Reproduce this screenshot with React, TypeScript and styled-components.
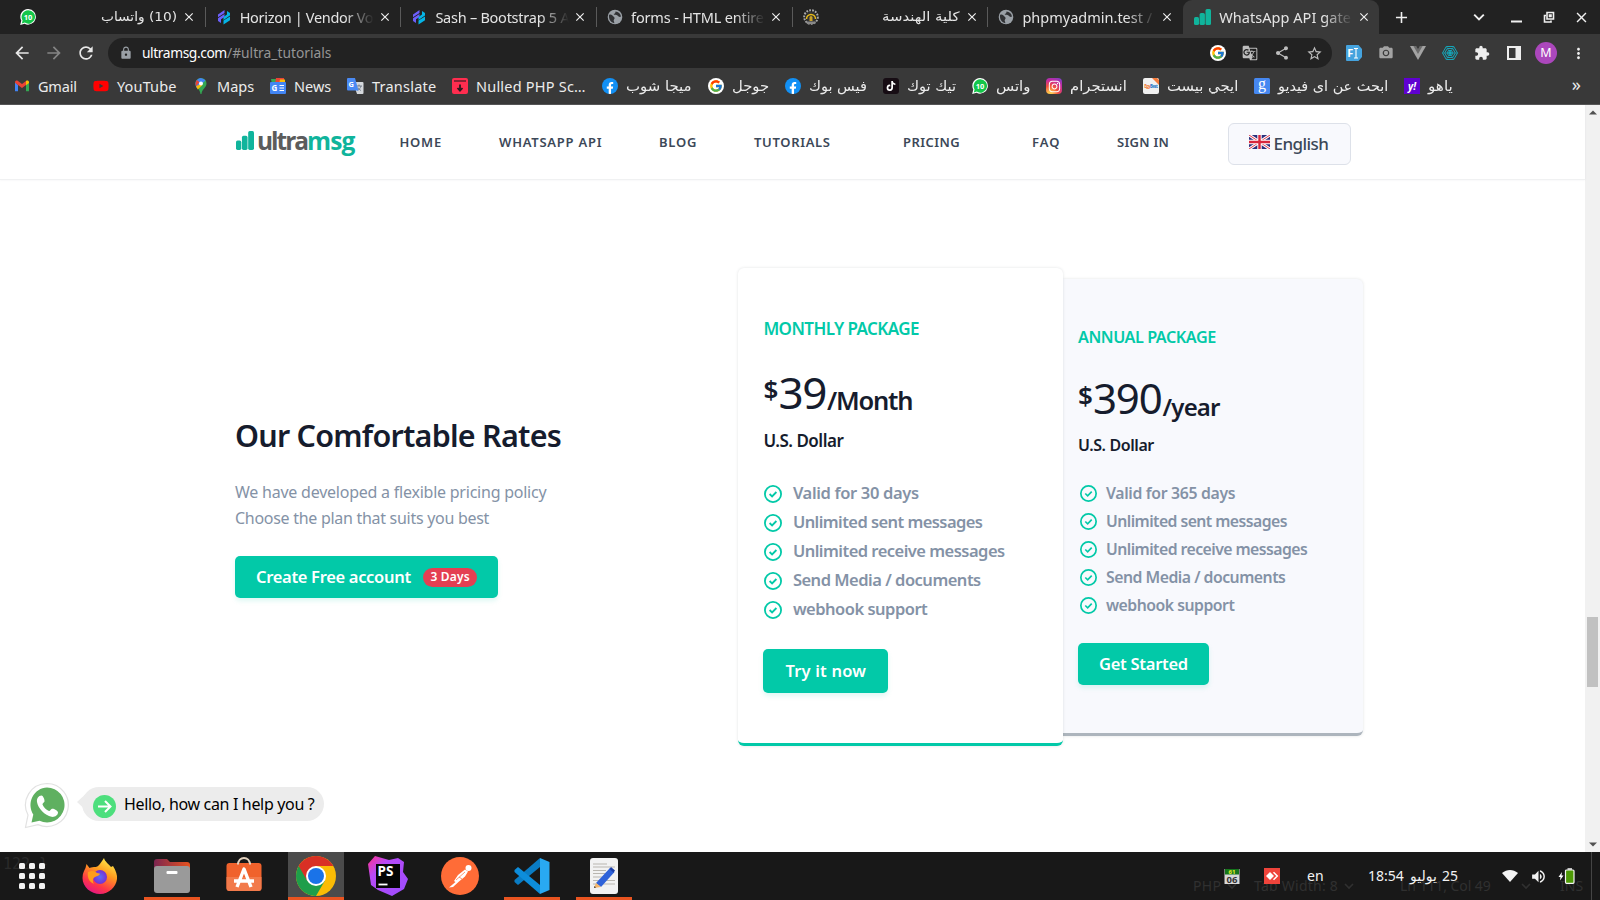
import React, { useLayoutEffect, useRef, useState } from "react";
import styled, { createGlobalStyle, css } from "styled-components";
import {
  MdArrowBack, MdArrowForward, MdRefresh, MdLock, MdShare, MdStarBorder, MdExtension,
  MdMoreVert, MdPhotoCamera, MdGTranslate, MdClose, MdAdd, MdVolumeUp,
} from "react-icons/md";
import { FaFacebookF, FaTiktok, FaInstagram, FaYoutube } from "react-icons/fa";
import { FcGoogle } from "react-icons/fc";

const Global = createGlobalStyle`
  * { box-sizing: border-box; }
  body { margin: 0; overflow: hidden; font-family: "Noto Sans", "DejaVu Sans", sans-serif; }
  svg { display: block; flex: none; }
`;

/* ---------- text set to a given measure ---------- */
const Measure = styled.span<{ $w: number; $rtl?: boolean }>`
  display: block;
  flex: none;
  width: ${(p) => p.$w}px;
  white-space: pre;
  direction: ${(p) => (p.$rtl ? "rtl" : "ltr")};
  text-align: left;
`;
const Inner = styled.span`
  display: inline-block;
  transform-origin: 0 50%;
`;
function Fit({ w, rtl, children, className }: { w: number; rtl?: boolean; children: string; className?: string }) {
  const ref = useRef<HTMLSpanElement>(null);
  const [style, setStyle] = useState<React.CSSProperties>({});
  useLayoutEffect(() => {
    const el = ref.current;
    if (!el) return;
    const natural = el.offsetWidth;
    setStyle(rtl ? { transform: `scaleX(${w / natural})` } : { letterSpacing: `${(w - natural) / children.length}px` });
  }, []);
  return (
    <Measure $w={w} $rtl={rtl} className={className}>
      <Inner ref={ref} style={style}>{children}</Inner>
    </Measure>
  );
}

const Screen = styled.div`
  width: 1600px;
  height: 900px;
  display: flex;
  flex-direction: column;
  overflow: hidden;
  background: #fff;
`;

/* ---------- browser chrome ---------- */
const TabStrip = styled.div`
  height: 34px;
  flex: none;
  display: flex;
  align-items: stretch;
  background: #222;
  padding-left: 9px;
  color: #e4e4e4;
`;
const Tab = styled.div<{ $active?: boolean }>`
  width: 195.7px;
  flex: none;
  display: flex;
  align-items: center;
  padding-left: 11px;
  font-size: 14.5px;
  line-height: 20px;
  border-radius: 9px 9px 0 0;
  background: ${(p) => (p.$active ? "#393939" : "transparent")};
  > svg:last-child { margin-left: 4px; }
`;
const TabTitle = styled.div<{ $rtl?: boolean }>`
  width: 134px;
  margin: -1px 0 0 8px;
  height: 20px;
  overflow: hidden;
  display: flex;
  justify-content: ${(p) => (p.$rtl ? "flex-end" : "flex-start")};
  ${(p) => p.$rtl ? css`padding-right: 1px; font-family: "DejaVu Sans", sans-serif; font-size: 13px;` : css`mask-image: linear-gradient(90deg, #000 78%, transparent 100%);`}
`;
const TabLine = styled.div`
  width: 1px;
  height: 20px;
  margin: 7px -1px 0 0;
  background: #5a5a5a;
`;
const WindowTools = styled.div`
  display: flex;
  align-items: center;
  margin-left: 13px;
  color: #f0f0f0;
  svg:nth-child(2) { margin-left: 62px; }
  svg:nth-child(3) { margin-left: 26px; }
  svg:nth-child(4) { margin-left: 21px; }
  svg:nth-child(5) { margin-left: 18px; }
`;
const Toolbar = styled.div`
  height: 38px;
  flex: none;
  background: #393939;
  display: flex;
  align-items: center;
  padding: 0 12px;
  color: #e8e8e8;
`;
const NavButtons = styled.div`
  display: flex;
  gap: 12px;
  width: 96px;
`;
const Omnibox = styled.div`
  width: 1224px;
  height: 30px;
  border-radius: 15px;
  background: #222;
  display: flex;
  align-items: center;
  padding: 0 9px 0 11px;
  font-size: 13.8px;
  color: #fff;
`;
const UrlRest = styled.div`
  margin-top: -1px;
  color: #959595;
  flex: 1;
`;
const Tools = styled.div<{ $gap: number }>`
  display: flex;
  align-items: center;
  gap: ${(p) => p.$gap}px;
  color: #bdbdbd;
`;
const Host = styled.div`
  margin: -1px 0 0 9px;
`;
const Extensions = styled(Tools)`
  margin-left: 14px;
  color: #eee;
`;
const Avatar = styled.div`
  width: 22px;
  height: 22px;
  margin: 0 -3px;
  border-radius: 50%;
  background: #ab47bc;
  color: #fff;
  font-size: 12.5px;
  line-height: 22px;
  text-align: center;
`;
const Bookmarks = styled.div`
  height: 33px;
  flex: none;
  background: #393939;
  border-bottom: 1px solid #575757;
  display: flex;
  align-items: center;
  gap: 16px;
  padding: 0 19px 4px 14px;
  color: #ececec;
  font-size: 14.5px;
  line-height: 22px;
`;
const Bookmark = styled.div<{ $rtl?: boolean }>`
  display: flex;
  align-items: center;
  gap: 8px;
  ${(p) => p.$rtl && css`font-family: "DejaVu Sans", sans-serif; font-size: 14px;`}
  > span { margin-top: -1px; }
`;
const More = styled.div`
  margin: -4px 0 0 auto;
  font-size: 18px;
`;

/* ---------- small icons ---------- */
const Disc = styled.div<{ $bg: string; $fg?: string; $r?: string }>`
  width: 16px;
  height: 16px;
  flex: none;
  display: flex;
  align-items: center;
  justify-content: center;
  overflow: hidden;
  border-radius: ${(p) => p.$r || "50%"};
  background: ${(p) => p.$bg};
  color: ${(p) => p.$fg || "#fff"};
  font: italic 700 10px/16px "Noto Sans", sans-serif;
`;
const FacebookF = styled(FaFacebookF)`
  margin-top: 4px;
`;
const Wa10 = () => (
  <svg width="16" height="16" viewBox="0 0 16 16">
    <path d="M8.2 0A7.8 7.8 0 1 1 4.6 14.8L.2 16l1.1-4.4A7.8 7.8 0 0 1 8.2 0z" fill="#fff" />
    <path d="M8.2 1.2A6.7 6.7 0 1 1 4.8 13.6L1.8 14.4l.8-3A6.7 6.7 0 0 1 8.2 1.2z" fill="#14c64a" />
    <text x="8.1" y="10.8" textAnchor="middle" fontSize="7.5" fontWeight="700" fontFamily="Noto Sans" fill="#fff">10</text>
  </svg>
);
const Prism = () => (
  <svg width="16" height="16" viewBox="0 0 16 16">
    <path d="M2 5.5 8.5 1v3L2 8.2z" fill="#6c5ffc" />
    <path d="M2 9.2 8.5 5v3L5 10.3V14l-3-2z" fill="#6c5ffc" />
    <path d="M14 6.5 7.5 11V8L11 5.5V2l3 2z" fill="#05b4e6" />
    <path d="M14 7.5 7.5 11.500v4L14 11.2z" fill="#05b4e6" />
  </svg>
);
const Globe = () => (
  <svg width="16" height="16" viewBox="0 0 16 16">
    <circle cx="8" cy="8" r="7.3" fill="#9aa0a6" />
    <path d="M2 6c2-1 3 0 4.5 1.5S8 9 7 10.5s.5 2 .3 3.7C4 13.5 1.5 10.5 2 6zM8.5 2.5c0 2-1 2.2-2 2.5 1 1.5 3 .5 4 1.5s2 2 3.5 1C13.5 4.5 11.5 2.8 8.5 2.5z" fill="#303134" />
  </svg>
);
const GearLogo = () => (
  <svg width="16" height="16" viewBox="0 0 16 16">
    <circle cx="8" cy="8" r="6.8" fill="none" stroke="#a9a9a9" strokeWidth="2" strokeDasharray="1.8 1.2" />
    <circle cx="8" cy="8" r="5.3" fill="#333" />
    <path d="M3.5 10a4.5 4.5 0 1 1 9 0" fill="none" stroke="#e8bb16" strokeWidth="1.5" />
    <path d="M6.5 12V8.5a1.5 1.5 0 0 1 3 0V12z" fill="#c9a227" />
    <path d="M3 12.5h10l-1 2.5H4z" fill="#888" />
  </svg>
);
const Bars = ({ w = 17, h = 16 }: { w?: number; h?: number }) => (
  <svg width={w} height={h} viewBox="0 0 17 16" preserveAspectRatio="none">
    <g fill="#10b49c">
      <rect x="0" y="8" width="5" height="8" rx="1.5" />
      <rect x="5.6" y="4" width="5.3" height="12" rx="1.5" />
      <rect x="11.5" y="0" width="5.5" height="16" rx="1.5" />
    </g>
  </svg>
);
const Gmail = () => (
  <svg width="16" height="16" viewBox="0 0 16 16">
    <path d="M1 4v9.3h3V7z" fill="#4285f4" /><path d="M15 4v9.3h-3V7z" fill="#34a853" />
    <path d="M1 4.2C1 2.5 2.900 2 4 2.900L8 6l4-3.100v4L8 10 1 4.8z" fill="#ea4335" />
    <path d="M12 2.900c1.200-.9 3-.4 3 1.300v.8l-3 2.200z" fill="#fbbc04" />
  </svg>
);
const MapsPin = () => (
  <svg width="16" height="16" viewBox="0 0 16 16">
    <path d="M8 0a5.500 5.500 0 0 1 5.500 5.500C13.500 9.500 9 11 8.500 16h-1C7 11 2.500 9.500 2.500 5.500A5.500 5.500 0 0 1 8 0z" fill="#34a853" />
    <path d="M4 1.900A5.500 5.500 0 0 1 12.500 2.400L4 10.200C3 9 2.500 7 2.500 5.500 2.500 4 3 2.800 4 1.900z" fill="#4285f4" />
    <path d="M4 1.900 6.500 4.200 3 8.300C2.200 6 2.500 3.500 4 1.900z" fill="#ea4335" />
    <path d="M3 8.300 6.300 6.800 9.500 7 4.800 11.500z" fill="#fbbc04" />
    <circle cx="8" cy="5.5" r="2" fill="#fff" />
  </svg>
);
const News = () => (
  <svg width="16" height="16" viewBox="0 0 16 16">
    <path d="M1 1h9l-1 5H2z" fill="#34a853" /><path d="M6 0h8v6H5z" fill="#ea4335" /><path d="M10 1.5h5V6H9z" fill="#fbbc04" />
    <rect y="4" width="16" height="12" rx="1" fill="#4285f4" />
    <path d="M9.5 7.500H14M9.500 10H14M9.500 12.500H14" stroke="#fff" strokeWidth="1.2" />
    <text x="1.5" y="13" fontSize="8" fontWeight="700" fill="#fff" fontFamily="Noto Sans">G</text>
  </svg>
);
const Translate = () => (
  <svg width="17" height="16" viewBox="0 0 17 16">
    <path d="M6 4h9.500a1 1 0 0 1 1 1v10a1 1 0 0 1-1 1H10z" fill="#d5d8dc" />
    <path d="M9.500 8H15M12 6.500V8M14 8c-.5 2-2 3.500-3.500 4.500M11 9.500c.5 1.500 2 2.500 3 3" stroke="#5f6b7a" strokeWidth=".8" fill="none" />
    <path d="M1 0h7l3.500 12.500H1a1 1 0 0 1-1-1V1a1 1 0 0 1 1-1z" fill="#4a8af4" />
    <text x="1.5" y="9" fontSize="7.5" fontWeight="700" fill="#fff" fontFamily="Noto Sans">G</text>
  </svg>
);
const Nulled = () => (
  <svg width="16" height="16" viewBox="0 0 16 16">
    <rect width="16" height="16" rx="2" fill="#ff2d4f" /><path d="M2 3h12" stroke="#3b1b22" strokeWidth="1.2" />
    <path d="M8 6.500v6M5.500 10 8 12.600 10.500 10" stroke="#2b1a1e" strokeWidth="1.8" fill="none" />
  </svg>
);
const Facebook = () => (<Disc $bg="#1290f5"><FacebookF size={12} /></Disc>);
const Google = () => (<Disc $bg="#fff"><FcGoogle size={14} /></Disc>);
const TikTok = () => (<Disc $bg="#170d14" $r="3px"><FaTiktok size={10} /></Disc>);
const Insta = () => (
  <Disc $bg="radial-gradient(circle at 25% 100%, #fec64b 10%, #f3513d 40%, #c32aa3 70%, #6a45d0 100%)" $r="4px"><FaInstagram size={13} /></Disc>
);
const EgyBest = () => (
  <svg width="16" height="16" viewBox="0 0 16 16">
    <rect width="16" height="16" rx="2" fill="#f1f1f1" /><path d="M9 0h5l2 2v5z" fill="#f47b3c" />
    <text x="1.2" y="10" fontSize="4.4" fontWeight="700" textLength="13.6" fontFamily="Noto Sans" fill="#f2732c">Egy<tspan fill="#2374c6">Best</tspan></text>
  </svg>
);
const GoogleOld = () => (
  <svg width="16" height="16" viewBox="0 0 16 16">
    <rect width="16" height="16" rx="1.5" fill="#4688f1" />
    <text x="8" y="11.2" textAnchor="middle" fontSize="16" fontFamily="Liberation Serif" fill="#fff">g</text>
  </svg>
);
const Vendor = () => (
  <svg width="16" height="16" viewBox="0 0 16 16">
    <path d="M1 0h11.500L16 4v8l-3.500 4H1a1 1 0 0 1-1-1V1a1 1 0 0 1 1-1z" fill="#45a3de" />
    <text x="1.2" y="12" fontSize="11" fontWeight="700" fontFamily="Noto Sans" fill="#fff">F</text>
    <path d="M8 3.500h4M8 13h4M10 3.500V13" stroke="#fff" strokeWidth="1.1" />
  </svg>
);
const VueMark = () => (
  <svg width="16" height="16" viewBox="0 0 16 16">
    <path d="M0 1h16L8 15z" fill="#a3a3a3" /><path d="M3.400 1H6l2 3.500L10 1h2.600L8 9z" fill="#6b6b6b" /><path d="M6 1h4L8 4.500z" fill="#393939" />
  </svg>
);
const Web = () => (
  <svg width="16" height="16" viewBox="0 0 16 16" fill="none" stroke="#16a5b8" strokeWidth="1">
    <path d="M4.300 1.500h7.400L15.500 8l-3.800 6.500H4.300L.5 8z" /><path d="M5.300 3.500h5.400L13.300 8l-2.600 4.500H5.300L2.700 8z" />
    <path d="M6.500 5.500h3L11 8l-1.500 2.500h-3L5 8z" /><path d="M.5 8h15M4.300 1.500l7.400 13M11.700 1.500l-7.400 13" strokeWidth=".6" />
    <circle cx="8" cy="8" r="1.3" fill="#16a5b8" />
  </svg>
);
const SidePanel = () => (
  <svg width="16" height="16" viewBox="0 0 16 16"><path d="M2 2h12v12H2z" fill="none" stroke="#eee" strokeWidth="2" /><path d="M9.500 1H15v14H9.500z" fill="#eee" /></svg>
);
const Cross = ({ s = 10 }: { s?: number }) => <MdClose size={s + 5} color="#f0f0f0" />;

/* ---------- web page ---------- */
const Viewport = styled.div`
  height: 747px;
  flex: none;
  display: flex;
`;
const Page = styled.div`
  width: 1585px;
  display: flex;
  flex-direction: column;
  position: relative;
`;
const Header = styled.header`
  height: 75px;
  flex: none;
  display: flex;
  align-items: center;
  padding-left: 236px;
  border-bottom: 1px solid #f0f1f2;
  box-shadow: 0 0 2px rgba(60, 72, 88, 0.08);
`;
const Logo = styled.div`
  display: flex;
  align-items: flex-end;
  width: 163.5px;
  height: 24px;
  margin-top: -2px;
  font: 700 24.5px/22px "Open Sans", sans-serif;
  color: #5c5c5c;
  > svg { margin: 0 3px 3.5px 0; }
  > span { margin-bottom: 1px; }
`;
const LogoMsg = styled(Fit)`
  color: #10b49c;
`;
const NavLink = styled.a<{ $ml: number }>`
  margin: 0 0 1px ${(p) => p.$ml}px;
  font-size: 13px;
  font-weight: 600;
  line-height: 20px;
  color: #3c4858;
`;
const Language = styled.button`
  width: 123px;
  height: 42px;
  margin: 4px 0 0 58.5px;
  display: flex;
  align-items: center;
  gap: 4px;
  padding: 0 0 0 20px;
  font: 500 17px/24px "Noto Sans", sans-serif;
  color: #3c4858;
  background: #f8f9fd;
  border: 1px solid #dde1e9;
  border-radius: 6px;
  > svg { margin-top: -4px; }
`;
const Body = styled.main`
  flex: 1;
  display: flex;
  align-items: flex-start;
  padding-left: 235px;
`;
const Pitch = styled.section`
  width: 503px;
  padding-top: 235px;
`;
const Heading = styled.h2`
  margin: 0;
  font-size: 30.5px;
  font-weight: 600;
  line-height: 40px;
  color: #161c2d;
`;
const Lead = styled.p`
  margin: 24px 0 25px;
  padding: 0;
  font-size: 16px;
  line-height: 26px;
  color: #8492a6;
`;
const Button = styled.button<{ $w: number; $h: number }>`
  width: ${(p) => p.$w}px;
  height: ${(p) => p.$h}px;
  flex: none;
  display: flex;
  align-items: center;
  justify-content: center;
  gap: 12px;
  padding: 0;
  border: 0;
  border-radius: 5px;
  background: #02c9a8;
  box-shadow: 0 3px 5px rgba(2, 201, 168, 0.13);
  color: #fff;
  font: 600 16.5px/24px "Noto Sans", sans-serif;
`;
const Badge = styled.span`
  width: 54px;
  height: 19px;
  display: flex;
  justify-content: center;
  border-radius: 10px;
  background: #e43f52;
  font-size: 12px;
  line-height: 18px;
`;
const Card = styled.article<{ $main?: boolean }>`
  width: ${(p) => (p.$main ? 325 : 300)}px;
  height: ${(p) => (p.$main ? 478.5 : 457)}px;
  margin-top: ${(p) => (p.$main ? 87.5 : 99)}px;
  padding: ${(p) => (p.$main ? "51px 0 0 25.4px" : "48px 0 0 15px")};
  position: relative;
  z-index: ${(p) => (p.$main ? 1 : 0)};
  border-bottom: 3px solid ${(p) => (p.$main ? "#02c9a8" : "#adb5bd")};
  border-radius: ${(p) => (p.$main ? "6px" : "0 6px 6px 0")};
  background: ${(p) => (p.$main ? "#fff" : "#f8f9fd")};
  box-shadow: 0 0 3px rgba(60, 72, 88, 0.16);
  color: #161c2d;
`;
const CardTitle = styled.div<{ $main?: boolean }>`
  font-size: ${(p) => (p.$main ? 17 : 16.2)}px;
  font-weight: 600;
  line-height: 20px;
  color: #02c9a8;
`;
const Price = styled.div<{ $main?: boolean }>`
  display: flex;
  align-items: flex-start;
  height: ${(p) => (p.$main ? 44 : 42)}px;
  margin-top: ${(p) => (p.$main ? 31 : 30)}px;
  gap: 1px;
  line-height: ${(p) => (p.$main ? 44 : 42)}px;
`;
const Dollar = styled.div`
  margin-top: -3px;
  font-size: 26px;
  font-weight: 600;
`;
const Amount = styled.div<{ $main?: boolean }>`
  font-size: ${(p) => (p.$main ? 44 : 42)}px;
`;
const Period = styled.div<{ $main?: boolean }>`
  margin-top: ${(p) => (p.$main ? 8 : 9)}px;
  font-size: ${(p) => (p.$main ? 25.5 : 24)}px;
  font-weight: 600;
`;
const Currency = styled.div<{ $main?: boolean }>`
  margin-top: ${(p) => (p.$main ? 17 : 16)}px;
  font-size: ${(p) => (p.$main ? 17 : 16)}px;
  font-weight: 600;
  line-height: 20px;
`;
const Features = styled.ul<{ $main?: boolean }>`
  list-style: none;
  margin: ${(p) => (p.$main ? "28.5px 0 24.5px 1px" : "24.5px 0 23.5px 1.5px")};
  padding: 0;
  font-size: ${(p) => (p.$main ? 16.5 : 15.8)}px;
  font-weight: 600;
  line-height: ${(p) => (p.$main ? 29 : 28)}px;
  color: #8492a6;
`;
const Feature = styled.li<{ $main?: boolean }>`
  display: flex;
  align-items: center;
  gap: ${(p) => (p.$main ? 10.5 : 9.5)}px;
  height: ${(p) => (p.$main ? 29 : 28)}px;
  > span { margin-top: -2px; }
`;
const CheckCircle = ({ s }: { s: number }) => (
  <svg width={s} height={s} viewBox="0 0 18 18" fill="none" stroke="#02c9a8" strokeWidth="1.8">
    <circle cx="9" cy="9" r="8.1" /><path d="m5.600 9 2.500 2.400 4.300-4.400" />
  </svg>
);
const Flag = () => (
  <svg width="21" height="14" viewBox="0 0 21 14">
    <rect width="21" height="14" fill="#2b2f7c" />
    <path d="M0 0l21 14M21 0 0 14" stroke="#fff" strokeWidth="3" /><path d="M0 0l21 14M21 0 0 14" stroke="#e0394a" strokeWidth="1" />
    <path d="M10.500 0v14M0 7h21" stroke="#fff" strokeWidth="4.4" /><path d="M10.500 0v14M0 7h21" stroke="#d8263c" strokeWidth="2.4" />
  </svg>
);
const Chat = styled.div`
  position: absolute;
  left: 23px;
  bottom: 23px;
  display: flex;
  align-items: flex-start;
  height: 47px;
`;
const ChatBubble = styled.div`
  width: 242px;
  height: 34px;
  margin: 5px 0 0 12px;
  padding-left: 11px;
  position: relative;
  display: flex;
  align-items: center;
  gap: 8px;
  border-radius: 17px;
  background: #ececec;
  font-size: 16px;
  line-height: 22px;
  color: #000;
  &::before {
    content: "";
    position: absolute;
    left: -5px;
    top: 3px;
    border: solid transparent;
    border-width: 12px 13px 12px 0;
    border-right-color: #ececec;
  }
`;
const Go = styled.div`
  width: 23px;
  height: 23px;
  margin-top: 5px;
  display: flex;
  align-items: center;
  justify-content: center;
  border-radius: 50%;
  background: #4ddf7d;
  position: relative;
`;
const Scrollbar = styled.div`
  width: 15px;
  background: #f1f1f1;
  display: flex;
  flex-direction: column;
  align-items: center;
  padding: 5px 0;
`;
const Thumb = styled.div`
  width: 11px;
  height: 70px;
  margin: 502px 0 auto;
  background: #c1c1c1;
`;

type Plan = { main?: boolean; title: [string, number]; amount: [string, number]; period: [string, number]; currency: number; features: [string, number][]; button: [string, number, number, number] };
const plans: Plan[] = [
  {
    main: true, title: ["MONTHLY PACKAGE", 155.5], amount: ["39", 47.5], period: ["/Month", 86], currency: 79.5,
    features: [["Valid for 30 days", 126], ["Unlimited sent messages", 190], ["Unlimited receive messages", 211.5], ["Send Media / documents", 188], ["webhook support", 134.5]],
    button: ["Try it now", 125, 44, 81],
  },
  {
    title: ["ANNUAL PACKAGE", 137.5], amount: ["390", 68.5], period: ["/year", 57], currency: 75.5,
    features: [["Valid for 365 days", 129], ["Unlimited sent messages", 181], ["Unlimited receive messages", 201.5], ["Send Media / documents", 179], ["webhook support", 128.5]],
    button: ["Get Started", 131, 42, 89],
  },
];
const PlanCard = ({ p }: { p: Plan }) => (
  <Card $main={p.main}>
    <CardTitle $main={p.main}><Fit w={p.title[1]}>{p.title[0]}</Fit></CardTitle>
    <Price $main={p.main}>
      <Dollar><Fit w={14}>$</Fit></Dollar>
      <Amount $main={p.main}><Fit w={p.amount[1]}>{p.amount[0]}</Fit></Amount>
      <Period $main={p.main}><Fit w={p.period[1]}>{p.period[0]}</Fit></Period>
    </Price>
    <Currency $main={p.main}><Fit w={p.currency}>U.S. Dollar</Fit></Currency>
    <Features $main={p.main}>
      {p.features.map(([t, w]) => (
        <Feature key={t} $main={p.main}><CheckCircle s={p.main ? 18 : 17} /><Fit w={w}>{t}</Fit></Feature>
      ))}
    </Features>
    <Button $w={p.button[1]} $h={p.button[2]}><Fit w={p.button[3]}>{p.button[0]}</Fit></Button>
  </Card>
);

/* ---------- desktop taskbar ---------- */
const Taskbar = styled.div`
  height: 48px;
  flex: none;
  position: relative;
  display: flex;
  align-items: stretch;
  padding-left: 4px;
  background: #181818;
`;
const Slot = styled.div<{ $first?: boolean; $open?: boolean; $on?: boolean }>`
  width: 56px;
  margin-right: ${(p) => (p.$first ? 12 : 16)}px;
  display: flex;
  align-items: center;
  justify-content: center;
  background: ${(p) => (p.$on ? "#4b4b4b" : "transparent")};
  box-shadow: ${(p) => (p.$open ? "inset 0 -3px #e95420" : "none")};
  position: relative;
`;
const Tray = styled.div`
  flex: 1;
  display: flex;
  align-items: center;
  justify-content: flex-end;
  color: #f2f2f2;
  font-size: 14px;
  line-height: 20px;
  position: relative;
`;
const Space = styled.div<{ $w: number }>`
  width: ${(p) => p.$w}px;
  flex: none;
`;
const Edge = styled.div`
  width: 1px;
  height: 48px;
  margin-right: 8px;
  background: #444;
`;
const Month = styled(Fit)`
  font-family: "DejaVu Sans", sans-serif;
`;
const Ghost = styled.div`
  position: absolute;
  left: 1193px;
  top: 24px;
  display: flex;
  align-items: center;
  font-size: 14px;
  line-height: 20px;
  color: #303030;
`;
const GhostCode = styled.div`
  position: absolute;
  left: 3px;
  top: 2px;
  font: 15px/20px "DejaVu Sans Mono", monospace;
  color: #2a2a2a;
  white-space: pre;
`;
const Chevron = ({ c = "#303030", s = 10 }: { c?: string; s?: number }) => (
  <svg width={s} height={s} viewBox="0 0 10 10"><path d="m1 3 4 4 4-4" fill="none" stroke={c} strokeWidth="1.6" /></svg>
);

const AppGrid = () => (
  <svg width="26" height="26" viewBox="0 0 26 26" fill="#f2f2f2">
    {[0, 10, 20].flatMap((x) => [0, 10, 20].map((y) => <rect key={`${x}-${y}`} x={x} y={y} width="6" height="6" rx="1.5" />))}
  </svg>
);
const Firefox = () => (
  <svg width="36" height="36" viewBox="0 0 36 36">
    <defs>
      <linearGradient id="ff" x1=".8" y1="0" x2=".3" y2="1"><stop offset="0" stopColor="#fff44f" /><stop offset=".4" stopColor="#ff9a1f" /><stop offset=".75" stopColor="#ff3647" /><stop offset="1" stopColor="#e31587" /></linearGradient>
      <radialGradient id="ffp"><stop offset="0" stopColor="#5b6df8" /><stop offset="1" stopColor="#7a2fd0" /></radialGradient>
    </defs>
    <path d="M22 0c1 4 5 6 7 9l2-1c3 5 4.500 9 4 13-1 8-8 15-17 15S.5 29 .5 20c0-5 2-8 3-10l1-4 3 4c2-1 4-1 6-1 3 0 6-5 8.500-9z" fill="url(#ff)" />
    <circle cx="18" cy="19" r="7" fill="url(#ffp)" />
    <path d="M6 14c4-2 7-1 9 1 2 0 3 1 3 1-1 2-4 2-5 3-2 1-3 4-1 7-5-2-7-7-6-12z" fill="#ff9d1c" />
  </svg>
);
const Files = () => (
  <svg width="36" height="34" viewBox="0 0 36 34">
    <defs><linearGradient id="fo"><stop offset="0" stopColor="#7b2550" /><stop offset="1" stopColor="#e8531f" /></linearGradient></defs>
    <path d="M3 0h10l3 3h17a3 3 0 0 1 3 3v9H0V3a3 3 0 0 1 3-3z" fill="url(#fo)" />
    <rect y="7" width="36" height="27" rx="3" fill="#9a9a9a" /><rect x="12.5" y="12" width="11" height="3" rx="1" fill="#fff" />
  </svg>
);
const Store = () => (
  <svg width="36" height="40" viewBox="0 0 36 40">
    <path d="M12 9C12-.5 24-.5 24 9" fill="none" stroke="#e5d3c0" strokeWidth="2" />
    <rect x=".5" y="7" width="35" height="28" rx="3" fill="#f0622c" /><path d="M.5 21h35v11a3 3 0 0 1-3 3h-29a3 3 0 0 1-3-3z" fill="#f27a4b" />
    <path d="M12 8.500V7M24 8.500V7" stroke="#e5d3c0" strokeWidth="2" />
    <path d="M11 31 18 13l7 18M8 25h20" fill="none" stroke="#fff" strokeWidth="3.4" strokeLinejoin="round" />
  </svg>
);
const Chrome = () => (
  <svg width="40" height="40" viewBox="0 0 40 40">
    <circle cx="20" cy="20" r="20" fill="#fbbc05" />
    <path d="M2.700 10A20 20 0 0 0 20 40L28.700 25 20 20z" fill="#1e9e4a" />
    <path d="M2.700 10A20 20 0 0 1 37.300 10H20L11.300 25z" fill="#d93025" />
    <circle cx="20" cy="20" r="10" fill="#fff" /><circle cx="20" cy="20" r="8" fill="#1a73e8" />
  </svg>
);
const PhpStorm = () => (
  <svg width="40" height="40" viewBox="0 0 40 40">
    <defs><linearGradient id="ps" x1="0" y1="0" x2="1" y2="1"><stop offset="0" stopColor="#ff318c" /><stop offset=".3" stopColor="#b74af7" /><stop offset="1" stopColor="#9b4dff" /></linearGradient></defs>
    <path d="M0 8 7 0l14 4 9-2 6 4-1 10 5 7-4 10-12 7-14-6-7-5z" fill="url(#ps)" />
    <rect x="8" y="8" width="24" height="24" fill="#050505" />
    <text x="9.5" y="20" fontSize="13.5" fontWeight="700" fontFamily="Noto Sans" fill="#fff">PS</text>
    <path d="M10.500 28.500h9" stroke="#fff" strokeWidth="1.8" />
  </svg>
);
const Postman = () => (
  <svg width="38" height="38" viewBox="0 0 38 38">
    <circle cx="19" cy="19" r="19" fill="#ff6c37" />
    <circle cx="27.5" cy="11" r="3" fill="#fff" /><path d="M24 12.500 17 18l-4 6 1.500 1L8 30.500l4-.5 6-5.500 6-5 3-5z" fill="#fff" />
    <path d="m15 23 9-8M18 20l3 2" stroke="#ff6c37" strokeWidth=".7" />
  </svg>
);
const Code = () => (
  <svg width="36" height="36" viewBox="0 0 36 36">
    <path d="M26 0v9L4 27l-3.500-3v-2z" fill="#0a7cc4" /><path d="M26 36v-9L4 9 .5 12v2z" fill="#0d8ddb" />
    <path d="M26 0l9.500 4v28L26 36z" fill="#29a9f2" />
  </svg>
);
const Editor = () => (
  <svg width="28" height="36" viewBox="0 0 28 36">
    <rect width="28" height="36" rx="3" fill="#f2f2f2" />
    <path d="M3 6h14M3 9h22M3 12.500h13M3 15.500h12M3 19h11M3 22.500h22M3 26h22" stroke="#b9b6b0" strokeWidth="1" />
    <path d="m20 10 4.500 4L11 29l-5-4z" fill="#2f62d9" /><path d="m21 9 4 3.500-1.500 2L19.500 11z" fill="#1d3fa8" /><path d="m6 25 5 4-7 1z" fill="#f4b56a" /><path d="m4.500 28 1.500 1.500-2 .5z" fill="#333" />
  </svg>
);
const CalendarTray = () => (
  <svg width="16" height="16" viewBox="0 0 16 16">
    <rect x=".5" y="1" width="15" height="15" fill="#d8d8d8" /><rect x="1" y="1" width="14" height="5.5" fill="#15761b" />
    <text x="8" y="6" textAnchor="middle" fontSize="6" fontWeight="700" fill="#e6f12a" fontFamily="Noto Sans">61</text>
    <text x="8" y="14.5" textAnchor="middle" fontSize="9.5" fontWeight="700" fill="#333" fontFamily="Noto Sans">06</text>
  </svg>
);
const AnyDesk = () => (
  <svg width="16" height="16" viewBox="0 0 16 16"><rect width="16" height="16" fill="#ef443b" /><path d="m6 4 4 4-4 4-4-4z" fill="#fff" /><path d="m9.500 4.200 3.800 3.800-3.800 3.800" fill="none" stroke="#fff" strokeWidth="1.5" /></svg>
);
const Wifi = () => <svg width="16" height="12" viewBox="0 0 16 12"><path d="M0 3c5-4 11-4 16 0L8 12z" fill="#f4f4f4" /></svg>;
const Battery = () => (
  <svg width="17" height="16" viewBox="0 0 17 16"><path d="M4 4 .5 9h2L2 12.500 5.500 7.500h-2z" fill="#fff" /><rect x="7.5" y="2" width="8.5" height="13.3" rx="1" fill="#4e9a06" stroke="#f4f4f4" strokeWidth="1.2" /><path d="M9.500 1h4.500" stroke="#f4f4f4" strokeWidth="1.5" /></svg>
);
const WhatsBubble = () => (
  <svg width="47" height="47" viewBox="0 0 47 47">
    <path d="M24 1.500A21.500 21.500 0 1 1 15 42.600L2.500 45.500 5 33A21.500 21.500 0 0 1 24 1.500z" fill="#fff" stroke="#e2e2e2" strokeWidth="1.2" />
    <path d="M24 5.500a17.500 17.500 0 1 1-7.500 33.300L8.500 40.500l1.800-8A17.500 17.500 0 0 1 24 5.500z" fill="#5fb060" />
    <path d="M18.500 13.500c-3 0-5 3-4.500 6.500.8 6 8 13.500 14.500 14.800 3 .6 6.500-1.300 6.500-4.500 0-1.500-4.500-4-6-3.500-1.200.4-2 2.500-3 2.200-2.500-.8-5.500-3.800-6.500-6.500-.3-1 1.600-2 2-3 .4-1.300-1.200-5.800-3-6z" fill="#fff" />
  </svg>
);

const tabs: { icon: React.ReactNode; text: string; w: number; rtl?: boolean; active?: boolean }[] = [
  { icon: <Wa10 />, text: "(10) واتساب", w: 76, rtl: true },
  { icon: <Prism />, text: "Horizon | Vendor Vo", w: 134 },
  { icon: <Prism />, text: "Sash – Bootstrap 5 A", w: 134 },
  { icon: <Globe />, text: "forms - HTML entire", w: 133 },
  { icon: <GearLogo />, text: "كلية الهندسة", w: 78, rtl: true },
  { icon: <Globe />, text: "phpmyadmin.test /", w: 130 },
  { icon: <Bars />, text: "WhatsApp API gate", w: 132, active: true },
];
const bookmarks: [React.ReactNode, string, number, boolean?][] = [
  [<Gmail />, "Gmail", 39], [<FaYoutube size={16} color="#ff0000" />, "YouTube", 60], [<MapsPin />, "Maps", 37],
  [<News />, "News", 37], [<Translate />, "Translate", 64], [<Nulled />, "Nulled PHP Sc…", 110],
  [<Facebook />, "ميجا شوب", 66, true], [<Google />, "جوجل", 37, true], [<Facebook />, "فيس بوك", 58, true],
  [<TikTok />, "تيك توك", 49, true], [<Wa10 />, "واتس", 34, true], [<Insta />, "انستجرام", 57, true],
  [<EgyBest />, "ايجي بيست", 71, true], [<GoogleOld />, "ابحث عن اى فيديو", 110, true], [<Disc $bg="#5f01d1" $r="0">y!</Disc>, "ياهو", 25, true],
];
const links: [string, number, number][] = [
  ["HOME", 42, 0], ["WHATSAPP API", 103, 57.5], ["BLOG", 38, 57], ["TUTORIALS", 77, 57], ["PRICING", 57, 72], ["FAQ", 28, 72], ["SIGN IN", 52, 57],
];

export default function App() {
  return (
    <Screen>
      <Global />
      <TabStrip>
        {tabs.map((t, i) => (
          <React.Fragment key={i}>
            <Tab $active={t.active}>
              {t.icon}
              <TabTitle $rtl={t.rtl}><Fit w={t.w} rtl={t.rtl}>{t.text}</Fit></TabTitle>
              <Cross s={9} />
            </Tab>
            {i < 5 && <TabLine />}
          </React.Fragment>
        ))}
        <WindowTools>
          <MdAdd size={19} />
          <Chevron c="#f0f0f0" s={12} />
          <svg width="11" height="12" viewBox="0 0 11 12"><path d="M0 10.500h11" stroke="#f0f0f0" strokeWidth="2" /></svg>
          <svg width="12" height="12" viewBox="0 0 12 12" fill="none" stroke="#f0f0f0" strokeWidth="1.6"><path d="M4 1.500h6.500V8H4zM3 4.500H1.500V11H8V9.500M6.500 4h1.500v1.500H6.500z" /></svg>
          <Cross s={12} />
        </WindowTools>
      </TabStrip>
      <Toolbar>
        <NavButtons>
          <MdArrowBack size={20} /><MdArrowForward size={20} color="#858585" /><MdRefresh size={20} />
        </NavButtons>
        <Omnibox>
          <MdLock size={14} color="#9aa0a6" />
          <Host><Fit w={85}>ultramsg.com</Fit></Host>
          <UrlRest><Fit w={104}>/#ultra_tutorials</Fit></UrlRest>
          <Tools $gap={16}><Google /><MdGTranslate size={16} /><MdShare size={16} /><MdStarBorder size={17} /></Tools>
        </Omnibox>
        <Extensions $gap={16}>
          <Vendor /><MdPhotoCamera size={16} color="#a3a3a3" /><VueMark /><Web />
          <MdExtension size={16} /><SidePanel /><Avatar>M</Avatar><MdMoreVert size={17} />
        </Extensions>
      </Toolbar>
      <Bookmarks>
        {bookmarks.map(([icon, text, w, rtl], i) => (
          <Bookmark key={i} $rtl={rtl}>{icon}<Fit w={w} rtl={rtl}>{text}</Fit></Bookmark>
        ))}
        <More>»</More>
      </Bookmarks>

      <Viewport>
        <Page>
          <Header>
            <Logo><Bars w={18} h={19} /><Fit w={50}>ultra</Fit><LogoMsg w={47.5}>msg</LogoMsg></Logo>
            {links.map(([t, w, ml]) => <NavLink key={t} $ml={ml}><Fit w={w}>{t}</Fit></NavLink>)}
            <Language><Flag /><Fit w={55}>English</Fit></Language>
          </Header>
          <Body>
            <Pitch>
              <Heading><Fit w={326}>Our Comfortable Rates</Fit></Heading>
              <Lead><Fit w={311}>We have developed a flexible pricing policy</Fit><Fit w={254}>Choose the plan that suits you best</Fit></Lead>
              <Button $w={263} $h={42}><Fit w={155}>Create Free account</Fit><Badge><Fit w={39}>3 Days</Fit></Badge></Button>
            </Pitch>
            {plans.map((p) => <PlanCard key={p.title[0]} p={p} />)}
          </Body>
          <Chat>
            <WhatsBubble />
            <ChatBubble>
              <Go><svg width="15" height="13" viewBox="0 0 15 13" fill="none" stroke="#fff" strokeWidth="2"><path d="M1 6.500h12M8 1l5.500 5.500L8 12" /></svg></Go>
              <Fit w={190}>Hello, how can I help you ?</Fit>
            </ChatBubble>
          </Chat>
        </Page>
        <Scrollbar>
          <svg width="8" height="5" viewBox="0 0 8 5"><path d="M0 4.500h8L4 .5z" fill="#505050" /></svg>
          <Thumb />
          <svg width="8" height="5" viewBox="0 0 8 5"><path d="M0 .5h8L4 4.500z" fill="#505050" /></svg>
        </Scrollbar>
      </Viewport>

      <Taskbar>
        <GhostCode>{"122 }"}</GhostCode>
        <Ghost>
          <Fit w={28}>PHP</Fit><Space $w={6} /><Chevron /><Space $w={17} />
          <Fit w={84}>Tab Width: 8</Fit><Space $w={6} /><Chevron /><Space $w={46} />
          <Fit w={91}>Ln 111, Col 49</Fit><Space $w={30} /><Chevron /><Space $w={29} />
          <Fit w={23}>INS</Fit>
        </Ghost>
        <Slot $first><AppGrid /></Slot>
        <Slot><Firefox /></Slot>
        <Slot $open><Files /></Slot>
        <Slot><Store /></Slot>
        <Slot $open $on><Chrome /></Slot>
        <Slot><PhpStorm /></Slot>
        <Slot><Postman /></Slot>
        <Slot $open><Code /></Slot>
        <Slot $open><Editor /></Slot>
        <Tray>
          <CalendarTray /><Space $w={24} /><AnyDesk /><Space $w={27} />
          <Fit w={17}>en</Fit><Space $w={44} />
          <Fit w={36}>18:54</Fit><Space $w={6} /><Month w={27} rtl>يوليو</Month><Space $w={5} /><Fit w={16}>25</Fit>
          <Space $w={44} /><Wifi /><Space $w={12} /><MdVolumeUp size={17} /><Space $w={11} /><Battery /><Space $w={16} />
          <Edge />
        </Tray>
      </Taskbar>
    </Screen>
  );
}
